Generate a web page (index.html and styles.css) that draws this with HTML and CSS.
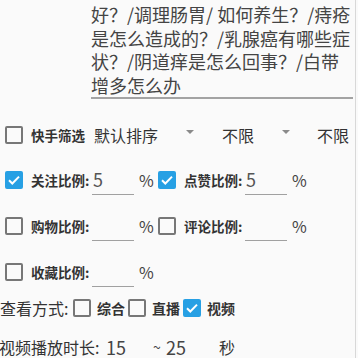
FILE: index.html
```html
<!DOCTYPE html>
<html lang="zh">
<head>
<meta charset="utf-8">
<link rel="stylesheet" href="styles.css">
</head>
<body>
<div class="page">
  <div class="textarea">好？/调理肠胃/ 如何养生？/痔疮<br>是怎么造成的？/乳腺癌有哪些症<br>状？/阴道痒是怎么回事？/白带<br>增多怎么办</div>

  <div class="row row1">
    <span class="cb"></span>
    <span class="lbl b1">快手筛选</span>
    <span class="sel s1">默认排序</span>
    <span class="arrow a1"></span>
    <span class="sel s2">不限</span>
    <span class="arrow a2"></span>
    <span class="sel s3">不限</span>
  </div>

  <div class="row rat">
    <span class="cb on"><svg viewBox="0 0 18 18"><path d="M4 9.2l3.3 3.3L14 5.6" fill="none" stroke="#fff" stroke-width="2"/></svg></span>
    <span class="lbl rl">关注比例:</span>
    <span class="inp">5</span>
    <span class="pct">%</span>
    <span class="cb on second"><svg viewBox="0 0 18 18"><path d="M4 9.2l3.3 3.3L14 5.6" fill="none" stroke="#fff" stroke-width="2"/></svg></span>
    <span class="lbl rl">点赞比例:</span>
    <span class="inp">5</span>
    <span class="pct">%</span>
  </div>

  <div class="row rat">
    <span class="cb"></span>
    <span class="lbl rl">购物比例:</span>
    <span class="inp"></span>
    <span class="pct">%</span>
    <span class="cb second"></span>
    <span class="lbl rl">评论比例:</span>
    <span class="inp"></span>
    <span class="pct">%</span>
  </div>

  <div class="row rat">
    <span class="cb"></span>
    <span class="lbl rl">收藏比例:</span>
    <span class="inp"></span>
    <span class="pct">%</span>
  </div>

  <div class="row row5">
    <span class="plain view">查看方式:</span>
    <span class="cb c5"></span>
    <span class="lbl v">综合</span>
    <span class="cb c5"></span>
    <span class="lbl v">直播</span>
    <span class="cb c5 on"><svg viewBox="0 0 18 18"><path d="M4 9.2l3.3 3.3L14 5.6" fill="none" stroke="#fff" stroke-width="2"/></svg></span>
    <span class="lbl v">视频</span>
  </div>

  <div class="row row6">
    <span class="plain dur">视频播放时长:</span>
    <span class="num n1">15</span>
    <span class="num tilde">~</span>
    <span class="num n2">25</span>
    <span class="plain sec">秒</span>
  </div>
</div>
</body>
</html>
```

FILE: styles.css
```css
html, body {
  margin: 0;
  padding: 0;
  background: #fafafa;
}
body {
  font-family: "Noto Sans CJK SC", "Noto Sans", sans-serif;
  color: #333;
  overflow: hidden;
}
.page {
  width: 355px;
  height: 358px;
  border-right: 1px solid #d8d8d8;
  overflow: hidden;
}
.textarea {
  margin-left: 91px;
  width: 262px;
  padding-top: 3px;
  font-size: 18px;
  line-height: 23.5px;
  color: #444;
  white-space: nowrap;
  border-bottom: 2px solid #a3a3a3;
  height: 94px;
}
.row {
  display: flex;
  align-items: center;
  white-space: nowrap;
}
.row1 {
  margin-top: 14px;
  height: 44px;
}
.rat {
  height: 46px;
}
.row5 {
  height: 26px;
}
.row6 {
  height: 35px;
  align-items: flex-end;
}
.cb {
  box-sizing: border-box;
  width: 18px;
  min-width: 18px;
  height: 18px;
  min-height: 18px;
  border: 2px solid #777;
  border-radius: 2px;
  margin-left: 5px;
  flex: 0 0 18px;
  display: block;
  position: relative;
}
.cb.on {
  background: #27a0e4;
  border-color: #27a0e4;
}
.cb svg {
  position: absolute;
  left: -2px;
  top: -2px;
  width: 18px;
  height: 18px;
}
.cb.second {
  margin-left: 4px;
}
.lbl {
  font-weight: bold;
  font-size: 13.5px;
  color: #333;
  margin-left: 8px;
}
.b1 {
  width: 55px;
}
.sel {
  font-size: 16px;
  color: #333;
}
.s1 { margin-left: 8px; width: 64px; }
.s2 { margin-left: 28px; width: 32px; }
.s3 { margin-left: 27px; }
.arrow {
  width: 0;
  height: 0;
  border-left: 4px solid transparent;
  border-right: 4px solid transparent;
  border-top: 4px solid #8a8a8a;
  margin-top: -7px;
}
.a1 { margin-left: 28px; }
.a2 { margin-left: 28px; }
.rl {
  width: 55px;
}
.inp {
  box-sizing: border-box;
  width: 42px;
  height: 26px;
  margin-left: 6px;
  margin-top: 4px;
  border-bottom: 1.5px solid #a0a0a0;
  font-size: 18px;
  line-height: 20px;
  color: #555;
  padding-left: 1px;
}
.pct {
  font-size: 16px;
  color: #444;
  width: 15px;
  margin-left: 5px;
}
.plain {
  font-size: 16px;
  color: #333;
  line-height: 18px;
}
.view {
  width: 70px;
  margin-left: 0;
}
.c5 {
  margin-left: 3px;
}
.v {
  margin-left: 6px;
  font-size: 14px;
}
.dur {
  margin-left: -1px;
  width: 107px;
}
.num {
  font-size: 18px;
  color: #444;
  line-height: 18px;
}
.n1 { width: 47px; }
.tilde { font-size: 14px; width: 13px; }
.n2 { width: 53px; }
.sec { margin-left: 0; }
```
